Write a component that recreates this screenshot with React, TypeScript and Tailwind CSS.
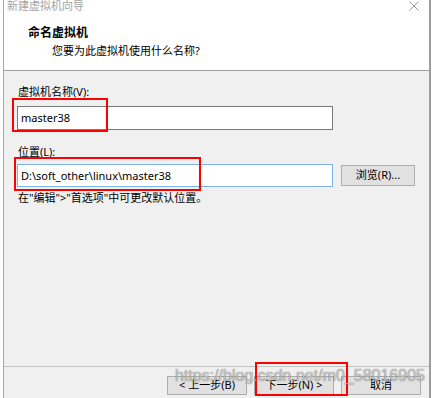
const font = "font-['Noto_Sans','Noto_Sans_CJK_SC',sans-serif]";

function WinButton({ label, className = "" }: { label: string; className?: string }) {
  return (
    <div
      className={`flex items-center justify-center bg-[#e1e1e1] border border-[#adadad] text-[11px] text-black ${className}`}
    >
      {label}
    </div>
  );
}

export default function App() {
  return (
    <div className={`relative w-[433px] h-[398px] overflow-hidden bg-white ${font}`}>
      <div className="ml-[3px] mr-[2px] h-full flex flex-col border-l border-l-[#a8a8a8] border-r-2 border-r-[#9c9c9c]">
        {/* header */}
        <div className="h-[71px] bg-white border-b border-[#a0a0a0] flex flex-col">
          <div className="h-[14px] flex items-start justify-between pl-[3px] pr-[10px]">
            <span className="text-[11px] leading-[12px] text-[#a3a3a3]">新建虚拟机向导</span>
            <svg width="10" height="10" viewBox="0 0 10 10" className="mt-[1px]">
              <path d="M0.5 0.5 L9.5 9.5 M9.5 0.5 L0.5 9.5" stroke="#9a9a9a" strokeWidth="1" />
            </svg>
          </div>
          <div className="pl-[24px] pt-[11px] text-[12px] leading-[16px] font-bold text-black">命名虚拟机</div>
          <div className="pl-[48px] pt-[2px] text-[11px] leading-[16px] text-black">您要为此虚拟机使用什么名称?</div>
        </div>

        {/* body */}
        <div className="flex-1 bg-[#f0f0f0] flex flex-col">
          <div className="flex-1 px-[13px] pt-[13px] flex flex-col text-[11px] text-black">
            <div className="leading-[16px] pl-[1px]">虚拟机名称(V):</div>
            <div className="mt-[6px] w-[316px] h-[24px] bg-white border border-[#7a7a7a] flex items-center px-[3px] leading-[16px]">
              master38
            </div>
            <div className="mt-[14px] leading-[16px] pl-[1px]">位置(L):</div>
            <div className="mt-[4px] flex items-center gap-[8px]">
              <div className="w-[316px] h-[23px] bg-white border border-[#7eb4ea] flex items-center px-[3px] leading-[16px]">
                D:\soft_other\linux\master38
              </div>
              <WinButton label="浏览(R)..." className="w-[74px] h-[21px]" />
            </div>
            <div className="mt-[3px] leading-[16px] pl-[1px]">在"编辑"&gt;"首选项"中可更改默认位置。</div>
          </div>
          <div className="h-[32px] border-t border-[#c4c4c4] flex items-start justify-end gap-[7px] pr-[8px] pt-[9px]">
            <WinButton label="< 上一步(B)" className="w-[80px] h-[19px]" />
            <WinButton label="下一步(N) >" className="w-[80px] h-[19px]" />
            <WinButton label="取消" className="w-[80px] h-[19px]" />
          </div>
        </div>
      </div>

      {/* red annotation boxes */}
      <div className="absolute left-[12px] top-[98px] w-[96px] h-[34px] border-2 border-[#ff0000]" />
      <div className="absolute left-[14px] top-[157px] w-[187px] h-[34px] border-2 border-[#ff0000]" />
      <div className="absolute left-[255px] top-[362px] w-[93px] h-[34px] border-2 border-[#ff0000]" />

      {/* watermark */}
      <div className="absolute left-[175px] top-[367px] text-[16px] leading-[18px] font-['Liberation_Sans',sans-serif] text-[rgba(255,255,255,0.6)] [text-shadow:0_0_1px_rgba(0,0,0,0.45),0_0_1px_rgba(0,0,0,0.3)] whitespace-nowrap">
        https://blog.csdn.net/m0_58016905
      </div>
    </div>
  );
}
